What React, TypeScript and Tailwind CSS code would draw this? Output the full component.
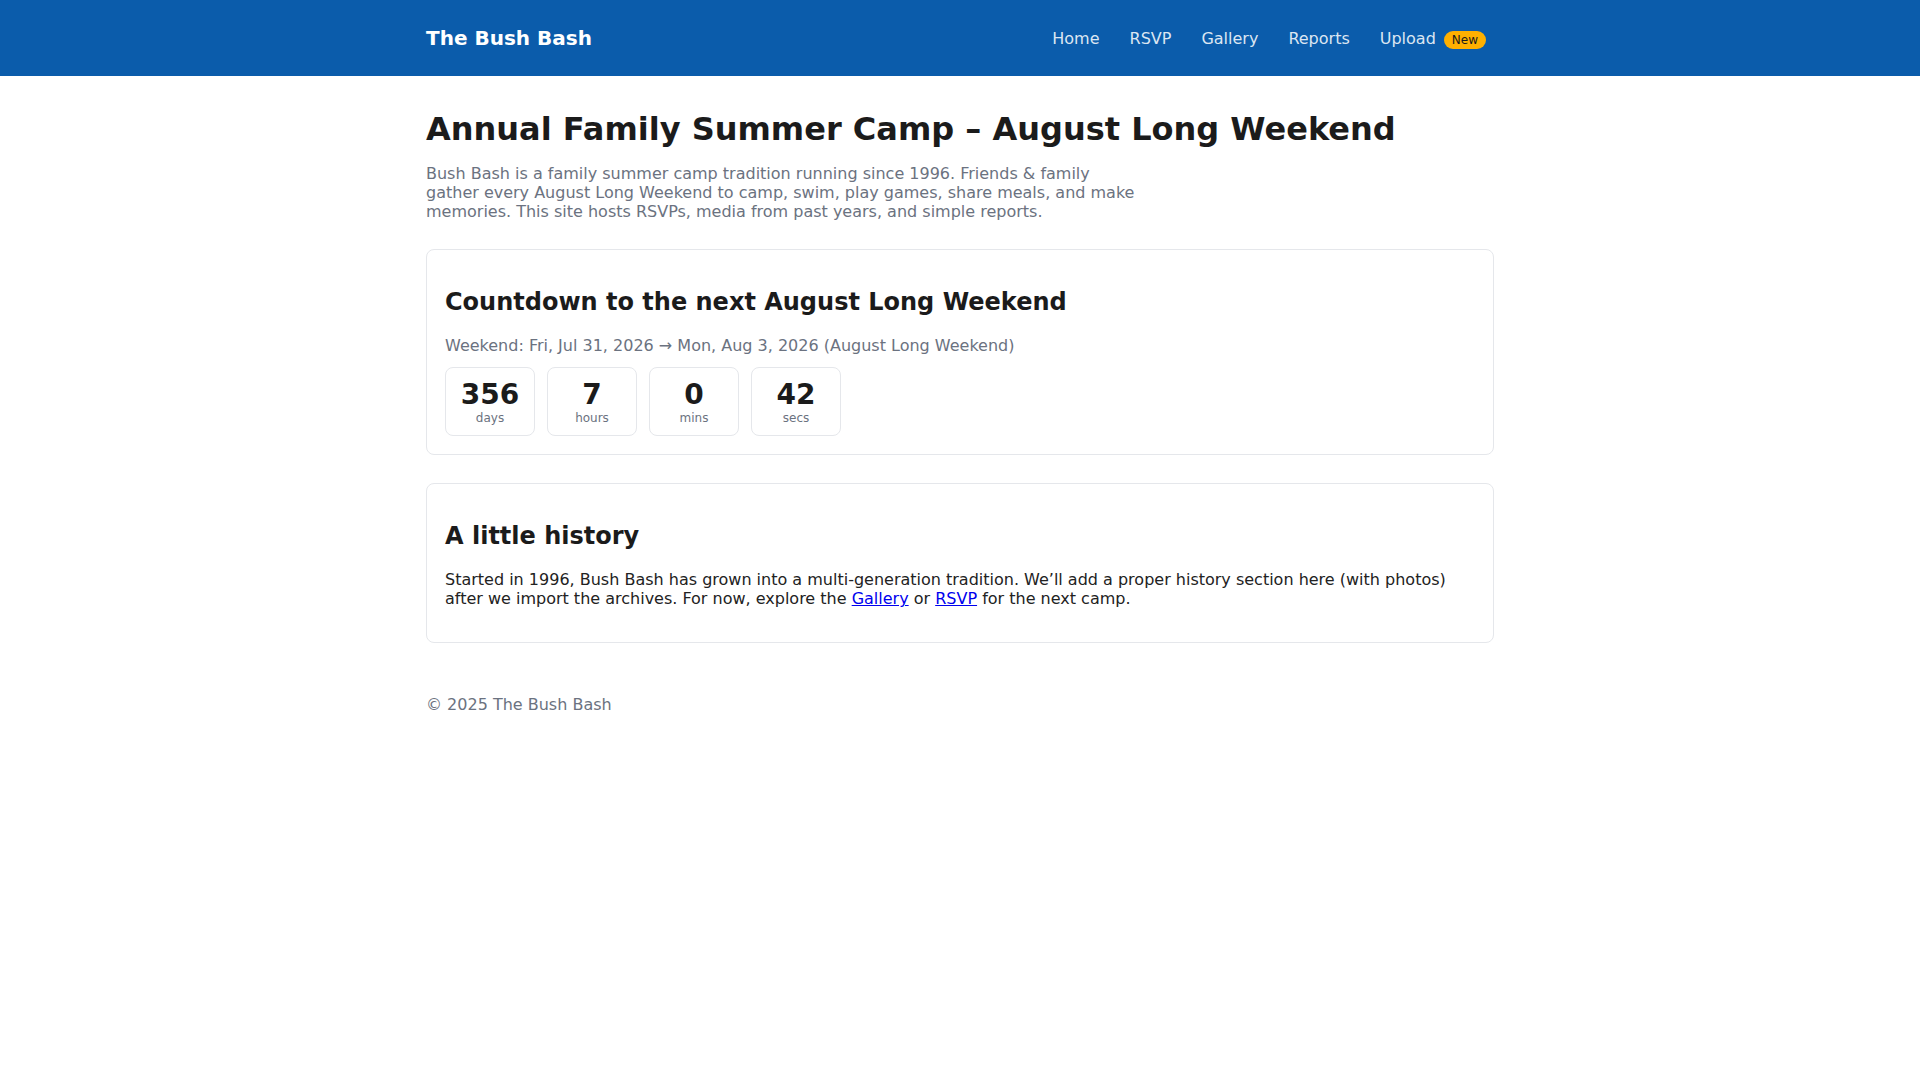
const NAV = ["Home", "RSVP", "Gallery", "Reports"];

const COUNTDOWN = [
  { value: "356", label: "days" },
  { value: "7", label: "hours" },
  { value: "0", label: "mins" },
  { value: "42", label: "secs" },
];

export default function App() {
  return (
    <div className="min-h-screen bg-white font-['DejaVu_Sans',sans-serif] text-[#1b1b1b]">
      <header className="bg-[#0b5cab]">
        <div className="mx-auto flex h-[76px] max-w-[1100px] items-center justify-between px-4">
          <a href="#" className="text-[20px] font-bold leading-[normal] text-white">
            The Bush Bash
          </a>
          <nav className="flex items-center gap-[14px] pt-px">
            {NAV.map((item) => (
              <a key={item} href="#" className="px-2 text-[16px] leading-[normal] text-[#dce6f2]">
                {item}
              </a>
            ))}
            <a href="#" className="flex items-baseline px-2 text-[16px] leading-[normal] text-[#dce6f2]">
              Upload
              <span className="ml-2 rounded-full bg-[#ffb000] px-2 py-[2px] text-[12px] leading-[normal] text-[#1b1b1b]">
                New
              </span>
            </a>
          </nav>
        </div>
      </header>

      <main className="mx-auto max-w-[1100px] px-4 pt-[34px]">
        <h1 className="mb-4 text-[32px] font-bold leading-[1.2]">
          Annual Family Summer Camp – August Long Weekend
        </h1>
        <p className="max-w-[716px] text-[16px] leading-[normal] text-[#6b7280]">
          Bush Bash is a family summer camp tradition running since 1996. Friends &amp; family gather every
          August Long Weekend to camp, swim, play games, share meals, and make memories. This site hosts
          RSVPs, media from past years, and simple reports.
        </p>

        <section className="mt-7 rounded-lg border border-[#e5e7eb] bg-white p-[18px]">
          <h2 className="my-5 text-[24px] font-bold leading-[normal]">Countdown to the next August Long Weekend</h2>
          <p className="text-[16px] leading-[normal] text-[#6b7280]">
            Weekend: Fri, Jul 31, 2026 → Mon, Aug 3, 2026 (August Long Weekend)
          </p>
          <div className="mt-3 flex gap-3">
            {COUNTDOWN.map((c) => (
              <div key={c.label} className="w-[90px] rounded-lg border border-[#e5e7eb] py-[10px] text-center">
                <div className="text-[28px] font-bold leading-[normal]">{c.value}</div>
                <div className="text-[12px] leading-[normal] text-[#6b7280]">{c.label}</div>
              </div>
            ))}
          </div>
        </section>

        <section className="mt-7 rounded-lg border border-[#e5e7eb] bg-white p-[18px]">
          <h2 className="my-5 text-[24px] font-bold leading-[normal]">A little history</h2>
          <p className="mb-4 text-[16px] leading-[normal] text-[#222222]">
            Started in 1996, Bush Bash has grown into a multi-generation tradition. We’ll add a proper history
            section here (with photos) after we import the archives. For now, explore the{" "}
            <a href="#" className="text-[#0000ee] underline">Gallery</a> or{" "}
            <a href="#" className="text-[#0000ee] underline">RSVP</a> for the next camp.
          </p>
        </section>

        <footer className="mt-[52px] pb-8 text-[16px] leading-[normal] text-[#6b7280]">© 2025 The Bush Bash</footer>
      </main>
    </div>
  );
}
